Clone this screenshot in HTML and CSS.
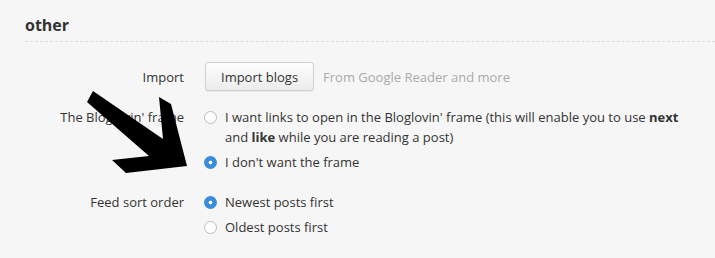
FILE: index.html
```html
<!DOCTYPE html>
<html>
<head>
<meta charset="utf-8">
<link rel="stylesheet" href="styles.css">
</head>
<body>
<div class="section">
  <div class="section-head"><h2 class="title">other</h2></div>
  <div class="row row-import">
    <div class="label">Import</div>
    <div class="control control-inline">
      <button class="btn">Import blogs</button>
      <span class="hint">From Google Reader and more</span>
    </div>
  </div>
  <div class="row">
    <div class="label">The Bloglovin' frame</div>
    <div class="control">
      <div class="option"><span class="radio"></span><span class="opt-text">I want links to open in the Bloglovin' frame (this will enable you to use <b>next</b> and <b>like</b> while you are reading a post)</span></div>
      <div class="option"><span class="radio checked"></span><span class="opt-text">I don't want the frame</span></div>
    </div>
  </div>
  <div class="row">
    <div class="label">Feed sort order</div>
    <div class="control">
      <div class="option"><span class="radio checked"></span><span class="opt-text">Newest posts first</span></div>
      <div class="option"><span class="radio"></span><span class="opt-text">Oldest posts first</span></div>
    </div>
  </div>
</div>
<svg class="arrow" width="715" height="258" viewBox="0 0 715 258">
  <polygon points="93,91 163,139 159,97 171,104 187,166 126,173 112,160 149,156 87,102" fill="#000"/>
</svg>
</body>
</html>
```
FILE: styles.css
```css
html, body {
  margin: 0;
  padding: 0;
}
body {
  background: #f6f6f6;
  font-family: "Open Sans", "DejaVu Sans", sans-serif;
  font-size: 13px;
  color: #333;
  width: 715px;
  height: 258px;
  overflow: hidden;
  position: relative;
}
.section {
  padding: 14px 0 0 25px;
}
.section-head {
  border-bottom: 1px dashed #dcdcdc;
  padding-bottom: 5px;
  margin-bottom: 20px;
}
.title {
  margin: 0;
  font-size: 16px;
  line-height: 22px;
  font-weight: 700;
  color: #333;
}
.row {
  display: flex;
  margin-bottom: 20px;
}
.row-import {
  align-items: center;
  margin-bottom: 16px;
}
.label {
  width: 159px;
  flex: none;
  text-align: right;
  line-height: 20px;
  color: #333;
  margin-right: 20px;
}
.control {
  width: 480px;
}
.control-inline {
  display: flex;
  align-items: center;
}
.btn {
  font-family: "Open Sans", "DejaVu Sans", sans-serif;
  font-size: 13px;
  color: #333;
  height: 29px;
  padding: 0 15px;
  margin-left: 1px;
  border: 1px solid #cfcfcf;
  border-radius: 3px;
  background: linear-gradient(#fdfdfd, #ececec);
  box-shadow: 0 1px 1px rgba(0,0,0,0.06);
}
.hint {
  margin-left: 9px;
  color: #aaa;
}
.option {
  display: flex;
  align-items: flex-start;
  line-height: 20px;
  margin-bottom: 5px;
}
.option:last-child {
  margin-bottom: 0;
}
.radio {
  flex: none;
  box-sizing: border-box;
  width: 13px;
  height: 13px;
  margin-top: 4px;
  margin-right: 8px;
  border-radius: 50%;
  border: 1px solid #bdbdbd;
  background: #fff;
}
.radio.checked {
  border: none;
  background: radial-gradient(circle, #fff 0 1.6px, #3b8ddc 2.2px);
}
.opt-text b {
  font-weight: 700;
}
.arrow {
  position: absolute;
  left: 0;
  top: 0;
  pointer-events: none;
}
```
